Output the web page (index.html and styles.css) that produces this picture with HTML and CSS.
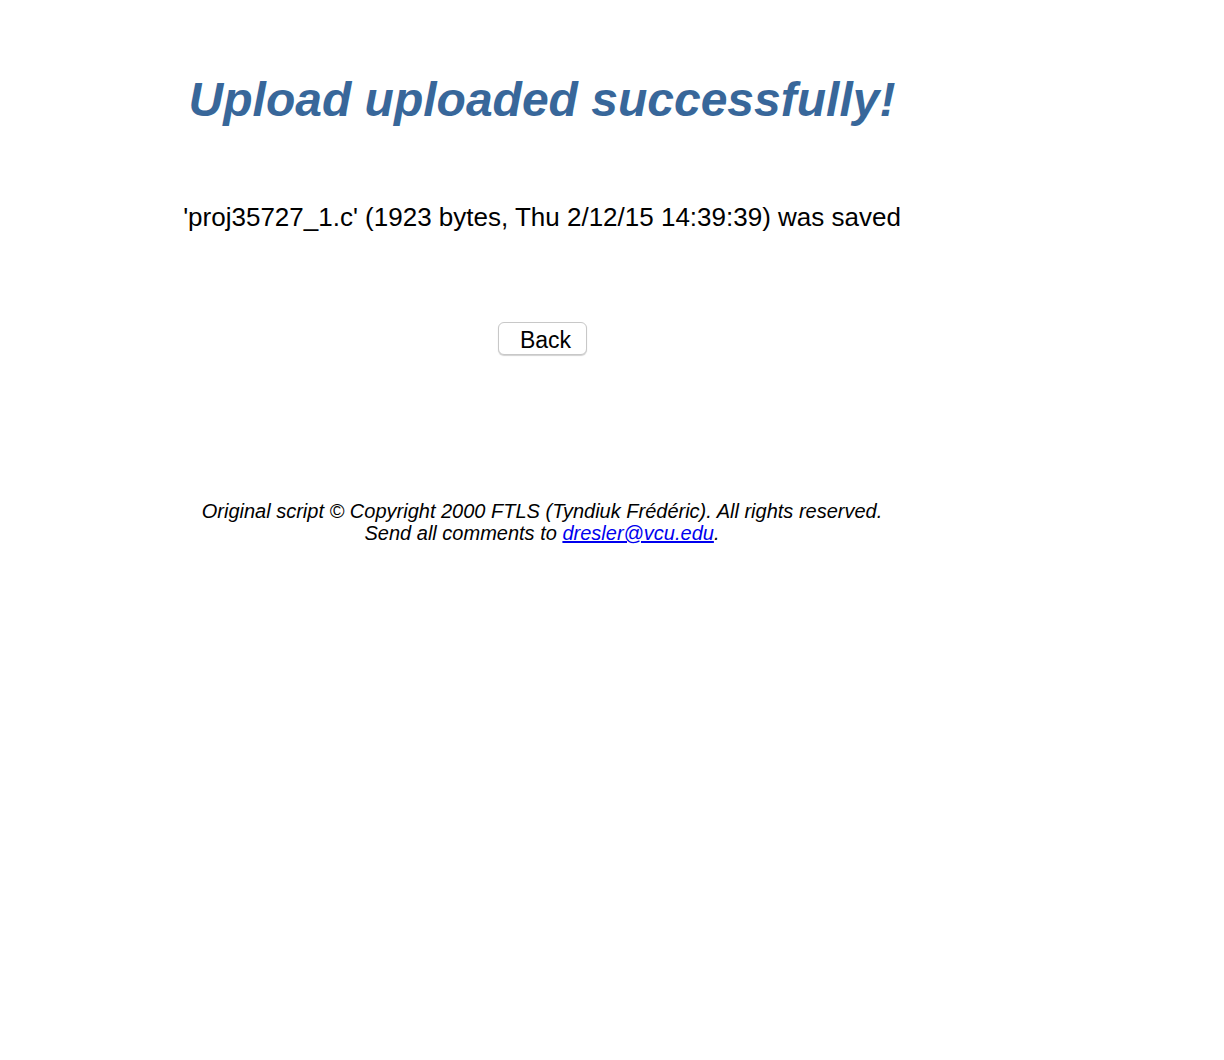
FILE: index.html
```html
<!DOCTYPE html>
<html lang="en">
<head>
<meta charset="utf-8">
<title>Upload uploaded successfully!</title>
<link rel="stylesheet" href="styles.css">
</head>
<body>
<div class="page">
  <h1 class="title">Upload uploaded successfully!</h1>
  <p class="message">'proj35727_1.c' (1923 bytes, Thu 2/12/15 14:39:39) was saved</p>
  <div class="actions"><button class="back-btn" type="button">Back</button></div>
  <p class="footer">Original script &copy; Copyright 2000 FTLS (Tyndiuk Fr&eacute;d&eacute;ric). All rights reserved.<br>Send all comments to <a class="mail" href="#">dresler@vcu.edu</a>.</p>
</div>
</body>
</html>
```

FILE: styles.css
```css
body {
  margin: 0;
  background: #ffffff;
  font-family: "Liberation Sans", Arial, Helvetica, sans-serif;
  color: #000000;
}

.page {
  width: 1084px;
  padding-top: 72px;
  text-align: center;
}

.title {
  margin: 0;
  font-size: 48px;
  line-height: 56px;
  font-weight: bold;
  font-style: italic;
  color: #38679a;
}

.message {
  margin: 74px 0 0;
  font-size: 26px;
  line-height: 30px;
}

.actions {
  margin-top: 90px;
  height: 33px;
}

.back-btn {
  box-sizing: border-box;
  width: 89px;
  height: 33px;
  padding: 3px 14px 0 21px;
  font-family: "Liberation Sans", Arial, Helvetica, sans-serif;
  font-size: 23px;
  line-height: 28px;
  color: #000000;
  background: #ffffff;
  border: 1px solid #c8c8c8;
  border-radius: 6px;
  box-shadow: 0 1px 1px rgba(0, 0, 0, 0.18);
}

.footer {
  margin: 145px 0 0;
  font-size: 20px;
  line-height: 22px;
  font-style: italic;
}

.mail {
  color: #0000ee;
  text-decoration: underline;
}
```
